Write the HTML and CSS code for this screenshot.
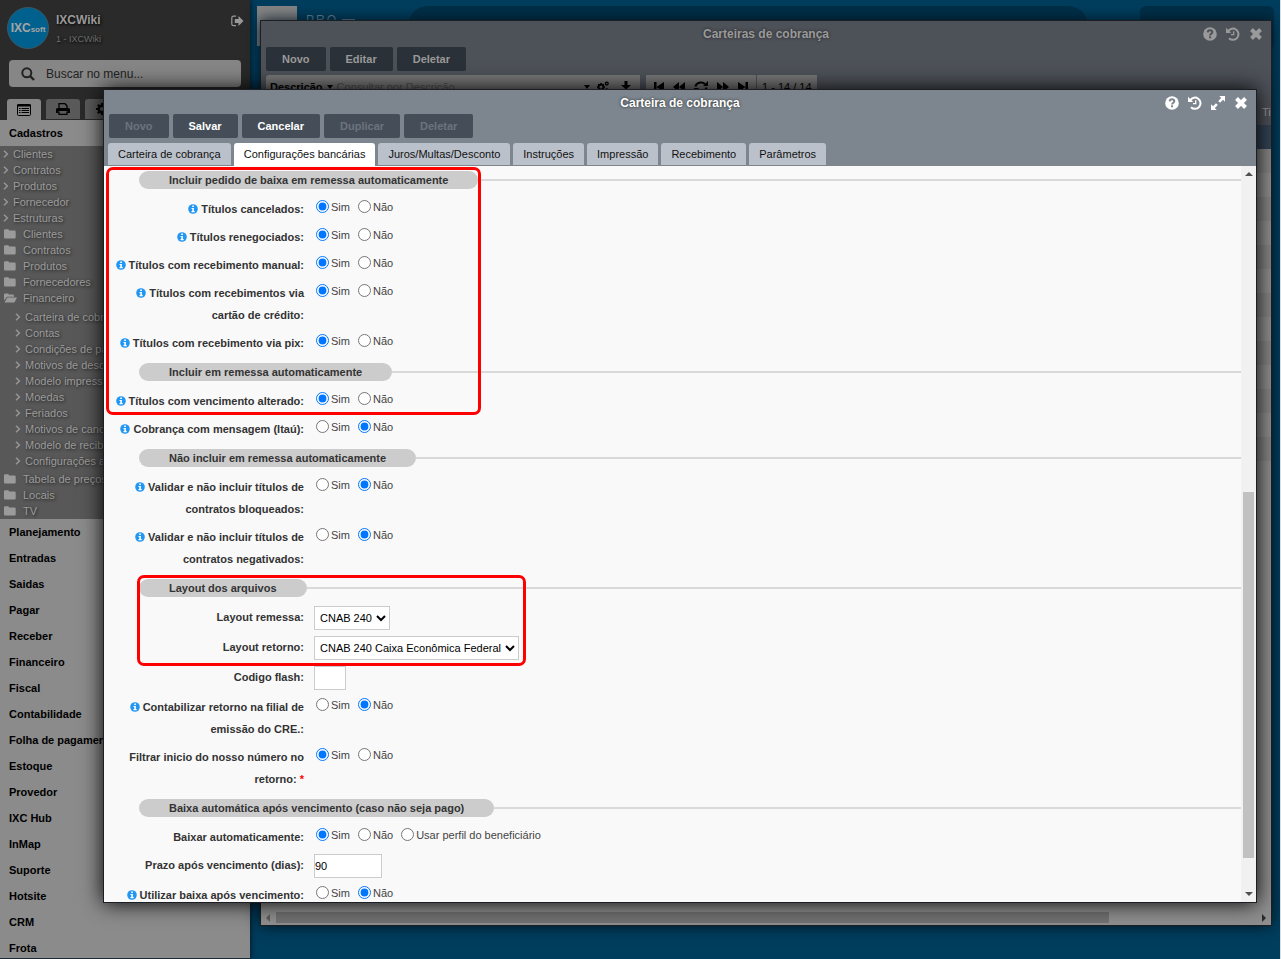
FILE: index.html
```html
<!DOCTYPE html>
<html lang="pt-BR">
<head>
<meta charset="utf-8">
<title>IXCWiki</title>
<link rel="stylesheet" href="styles.css">
</head>
<body>
<svg class="sprite" aria-hidden="true">
  <symbol id="i-help" viewBox="0 0 14 14"><circle cx="7" cy="7" r="6.8" fill="currentColor"/><path d="M4.700 5.400C4.800 3.900 5.800 3.300 7 3.300s2.300.6 2.300 1.900c0 1.500-2.200 1.500-2.200 3.200" fill="none" stroke="var(--hole)" stroke-width="2"/><rect x="6.100" y="9.300" width="2" height="2" fill="var(--hole)"/></symbol>
  <symbol id="i-history" viewBox="0 0 14 14"><path d="M2.200 4.200A5.600 5.600 0 1 1 3 11.200" fill="none" stroke="currentColor" stroke-width="2"/><path d="M0 .8V6h5.200z" fill="currentColor"/><path d="M7.700 4.200v3.500H5" fill="none" stroke="currentColor" stroke-width="1.300"/></symbol>
  <symbol id="i-expand" viewBox="0 0 14 14"><path d="M8.300 0H14v5.700L12 3.800 9 6.800 7.200 5l3-3zM5.700 14H0V8.300l2 1.900 3-3L6.800 9l-3 3z" fill="currentColor"/></symbol>
  <symbol id="i-close" viewBox="0 0 14 14"><path d="M2.500 2.500l9 9M11.500 2.500l-9 9" stroke="currentColor" stroke-width="4" fill="none"/></symbol>
  <symbol id="i-info" viewBox="0 0 10 10"><circle cx="5" cy="5" r="4.800" fill="#2196f3"/><path d="M4.200 1.500h1.700v1.400H4.200zM3.500 4h2.400v3h.8v1.200H3.500V7h.8V5.100h-.8z" fill="#fff"/></symbol>
  <symbol id="i-angle" viewBox="0 0 6 8"><path d="M1 .8L4.400 4 1 7.200" fill="none" stroke="currentColor" stroke-width="1.300"/></symbol>
  <symbol id="i-folder" viewBox="0 0 12 10"><path d="M0 1.500Q0 .3 1.200.3h2.600Q5 .3 5 1.500h5.500q1.200 0 1.200 1.200v5.600q0 1.200-1.200 1.200H1.200Q0 9.500 0 8.300z" fill="currentColor"/></symbol>
  <symbol id="i-folder-open" viewBox="0 0 13 10"><path d="M0 7.500v-6Q0 .4 1.200.4h2.500q1.100 0 1.100 1.100h4q1.200 0 1.200 1.200v1H3.800q-.8 0-1.300.6zM3.900 4.600H13L10.700 9q-.3.500-1 .5H.5L3 5.100q.3-.5.900-.5z" fill="currentColor"/></symbol>
  <symbol id="i-logout" viewBox="0 0 13 12"><path d="M5 1.200H2.500Q.8 1.200.8 2.900v6q0 1.700 1.700 1.700H5" fill="none" stroke="currentColor" stroke-width="1.200"/><path d="M7.500 1l5 5-5 5V8H3.800V4h3.700z" fill="currentColor"/></symbol>
  <symbol id="i-search" viewBox="0 0 14 14"><circle cx="5.800" cy="5.800" r="4.500" fill="none" stroke="currentColor" stroke-width="2"/><path d="M9 9l4 4" stroke="currentColor" stroke-width="2.400"/></symbol>
  <symbol id="i-list" viewBox="0 0 14 12"><rect x=".5" y=".5" width="13" height="11" rx="1" fill="none" stroke="currentColor"/><path d="M0 1.500h14" stroke="currentColor" stroke-width="2"/><path d="M2 4.500h1.500M4.500 4.500H12M2 6.500h1.500M4.500 6.500H12M2 8.500h1.500M4.500 8.500H12" stroke="currentColor"/></symbol>
  <symbol id="i-print" viewBox="0 0 14 12"><path d="M3 6V.7h6L11 2.700V6" fill="none" stroke="currentColor" stroke-width="1.300"/><path d="M1.500 5h11Q14 5 14 6.500V10h-2.500V8h-9v2H0V6.500Q0 5 1.500 5z" fill="currentColor"/><path d="M3 8.500v2.800h8V8.500" fill="none" stroke="currentColor" stroke-width="1.300"/></symbol>
  <symbol id="i-gear" viewBox="0 0 12 12"><circle cx="6" cy="6" r="3.300" fill="none" stroke="currentColor" stroke-width="2.400"/><path d="M6 0v2.500M6 9.500V12M0 6h2.500M9.500 6H12M1.800 1.800l1.700 1.700M8.500 8.500l1.700 1.700M10.200 1.800L8.500 3.500M3.500 8.500l-1.700 1.700" stroke="currentColor" stroke-width="2"/></symbol>
  <symbol id="i-gears" viewBox="0 0 12 12"><circle cx="4" cy="6" r="2.400" fill="none" stroke="currentColor" stroke-width="1.700"/><path d="M4 2v1.600M4 8.400V10M0 6h1.600M6.400 6H8M1.200 3.200l1.200 1.200M5.600 7.600l1.200 1.200M6.800 3.200L5.600 4.400M2.400 7.600L1.200 8.800" stroke="currentColor" stroke-width="1.500"/><circle cx="9.800" cy="2.600" r="1.400" fill="none" stroke="currentColor" stroke-width="1.300"/><circle cx="9.800" cy="9.400" r="1.400" fill="none" stroke="currentColor" stroke-width="1.300"/></symbol>
  <symbol id="i-download" viewBox="0 0 12 12"><path d="M4.500 0h3v4H11L6 8.500 1 4h3.500zM0 9h12v3H0z" fill="currentColor"/></symbol>
  <symbol id="i-first" viewBox="0 0 10 12"><path d="M0 1h2.500v10H0zM10 1v10L2.500 6z" fill="currentColor"/></symbol>
  <symbol id="i-prev" viewBox="0 0 12 12"><path d="M6 1v10L0 6zM12 1v10L6 6z" fill="currentColor"/></symbol>
  <symbol id="i-refresh" viewBox="0 0 14 12"><path d="M1.500 5.500A5.500 4.500 0 0 1 11 3M12.500 6.500A5.500 4.500 0 0 1 3 9" fill="none" stroke="currentColor" stroke-width="2"/><path d="M14 0v5H9zM0 12V7h5z" fill="currentColor"/></symbol>
</svg>

<div class="app">
  <aside class="sidebar">
    <header class="profile">
      <div class="logo"><b>IXC</b><span>soft</span></div>
      <div class="who"><strong>IXCWiki</strong><small>1 - IXCWiki</small></div>
      <button class="plain" aria-label="Sair"><svg width="13" height="12"><use href="#i-logout"/></svg></button>
    </header>
    <label class="search"><svg width="14" height="14"><use href="#i-search"/></svg><input type="text" placeholder="Buscar no menu..." aria-label="Buscar no menu"></label>
    <div class="modes">
      <button class="mode mode-on" aria-label="Menu"><svg width="14" height="12"><use href="#i-list"/></svg></button>
      <button class="mode" aria-label="Imprimir"><svg width="14" height="12"><use href="#i-print"/></svg></button>
      <button class="mode" aria-label="Ajustes"><svg width="12" height="12"><use href="#i-gear"/></svg></button>
    </div>
    <nav>
      <a class="group" href="#">Cadastros</a>
      <div class="tree">
        <a href="#"><svg width="6" height="8"><use href="#i-angle"/></svg>Clientes</a>
        <a href="#"><svg width="6" height="8"><use href="#i-angle"/></svg>Contratos</a>
        <a href="#"><svg width="6" height="8"><use href="#i-angle"/></svg>Produtos</a>
        <a href="#"><svg width="6" height="8"><use href="#i-angle"/></svg>Fornecedor</a>
        <a href="#"><svg width="6" height="8"><use href="#i-angle"/></svg>Estruturas</a>
        <a class="folder" href="#"><svg width="12" height="10"><use href="#i-folder"/></svg>Clientes</a>
        <a class="folder" href="#"><svg width="12" height="10"><use href="#i-folder"/></svg>Contratos</a>
        <a class="folder" href="#"><svg width="12" height="10"><use href="#i-folder"/></svg>Produtos</a>
        <a class="folder" href="#"><svg width="12" height="10"><use href="#i-folder"/></svg>Fornecedores</a>
        <a class="folder" href="#"><svg width="13" height="10"><use href="#i-folder-open"/></svg>Financeiro</a>
        <div class="subtree">
          <a href="#"><svg width="6" height="8"><use href="#i-angle"/></svg>Carteira de cobrança</a>
          <a href="#"><svg width="6" height="8"><use href="#i-angle"/></svg>Contas</a>
          <a href="#"><svg width="6" height="8"><use href="#i-angle"/></svg>Condições de pagamento</a>
          <a href="#"><svg width="6" height="8"><use href="#i-angle"/></svg>Motivos de desconto</a>
          <a href="#"><svg width="6" height="8"><use href="#i-angle"/></svg>Modelo impressão</a>
          <a href="#"><svg width="6" height="8"><use href="#i-angle"/></svg>Moedas</a>
          <a href="#"><svg width="6" height="8"><use href="#i-angle"/></svg>Feriados</a>
          <a href="#"><svg width="6" height="8"><use href="#i-angle"/></svg>Motivos de cancelamento</a>
          <a href="#"><svg width="6" height="8"><use href="#i-angle"/></svg>Modelo de recibo</a>
          <a href="#"><svg width="6" height="8"><use href="#i-angle"/></svg>Configurações adicionais</a>
        </div>
        <a class="folder" href="#"><svg width="12" height="10"><use href="#i-folder"/></svg>Tabela de preços</a>
        <a class="folder" href="#"><svg width="12" height="10"><use href="#i-folder"/></svg>Locais</a>
        <a class="folder" href="#"><svg width="12" height="10"><use href="#i-folder"/></svg>TV</a>
      </div>
      <a class="group" href="#">Planejamento</a>
      <a class="group" href="#">Entradas</a>
      <a class="group" href="#">Saidas</a>
      <a class="group" href="#">Pagar</a>
      <a class="group" href="#">Receber</a>
      <a class="group" href="#">Financeiro</a>
      <a class="group" href="#">Fiscal</a>
      <a class="group" href="#">Contabilidade</a>
      <a class="group" href="#">Folha de pagamento</a>
      <a class="group" href="#">Estoque</a>
      <a class="group" href="#">Provedor</a>
      <a class="group" href="#">IXC Hub</a>
      <a class="group" href="#">InMap</a>
      <a class="group" href="#">Suporte</a>
      <a class="group" href="#">Hotsite</a>
      <a class="group" href="#">CRM</a>
      <a class="group" href="#">Frota</a>
    </nav>
  </aside>

  <main class="desktop">
    <div class="tile"></div>
    <div class="brand"><span>P</span><span>R</span><span>O</span><i></i></div>
    <div class="bar"></div>
    <div class="chip"></div>
  </main>

  <section class="window back">
    <header class="head">
      <div class="titlebar">
        <h2>Carteiras de cobrança</h2>
        <div class="tools">
          <button class="plain" aria-label="Ajuda"><svg width="14" height="14"><use href="#i-help"/></svg></button>
          <button class="plain" aria-label="Histórico"><svg width="14" height="14"><use href="#i-history"/></svg></button>
          <button class="plain" aria-label="Fechar"><svg width="14" height="14"><use href="#i-close"/></svg></button>
        </div>
      </div>
      <div class="actions"><button>Novo</button><button>Editar</button><button>Deletar</button></div>
      <div class="filters">
        <div class="filter">
          <b>Descrição</b><i class="caret"></i>
          <input type="text" placeholder="Consultar por Descrição" aria-label="Consultar por Descrição">
          <i class="caret"></i><svg width="12" height="12"><use href="#i-gears"/></svg><svg width="12" height="12"><use href="#i-download"/></svg>
        </div>
        <div class="pager">
          <svg width="10" height="12"><use href="#i-first"/></svg>
          <svg width="12" height="12"><use href="#i-prev"/></svg>
          <svg width="14" height="12"><use href="#i-refresh"/></svg>
          <svg class="flip" width="12" height="12"><use href="#i-prev"/></svg>
          <svg class="flip" width="10" height="12"><use href="#i-first"/></svg>
        </div>
        <div class="count">1 - 14 / 14</div>
      </div>
      <div class="columns">Tipo</div>
    </header>
    <div class="rows"></div>
    <div class="hscroll"><i class="left"></i><div class="htrack"><div class="hthumb"></div></div><i class="right"></i></div>
  </section>

  <section class="window front">
    <header class="head">
      <div class="titlebar">
        <h2>Carteira de cobrança</h2>
        <div class="tools">
          <button class="plain" aria-label="Ajuda"><svg width="14" height="14"><use href="#i-help"/></svg></button>
          <button class="plain" aria-label="Histórico"><svg width="14" height="14"><use href="#i-history"/></svg></button>
          <button class="plain" aria-label="Expandir"><svg width="14" height="14"><use href="#i-expand"/></svg></button>
          <button class="plain" aria-label="Fechar"><svg width="14" height="14"><use href="#i-close"/></svg></button>
        </div>
      </div>
      <div class="actions"><button disabled>Novo</button><button>Salvar</button><button>Cancelar</button><button disabled>Duplicar</button><button disabled>Deletar</button></div>
      <div class="tabs" role="tablist">
        <button role="tab">Carteira de cobrança</button><button role="tab" class="active" aria-selected="true">Configurações bancárias</button><button role="tab">Juros/Multas/Desconto</button><button role="tab">Instruções</button><button role="tab">Impressão</button><button role="tab">Recebimento</button><button role="tab">Parâmetros</button>
      </div>
    </header>
    <div class="body">
      <form class="form">
        <div class="section"><h3>Incluir pedido de baixa em remessa automaticamente</h3></div>
        <div class="field"><span class="label"><svg width="10" height="10"><use href="#i-info"/></svg> Títulos cancelados:</span><div class="radios"><label><input type="radio" name="a" checked>Sim</label><label><input type="radio" name="a">Não</label></div></div>
        <div class="field"><span class="label"><svg width="10" height="10"><use href="#i-info"/></svg> Títulos renegociados:</span><div class="radios"><label><input type="radio" name="b" checked>Sim</label><label><input type="radio" name="b">Não</label></div></div>
        <div class="field"><span class="label"><svg width="10" height="10"><use href="#i-info"/></svg> Títulos com recebimento manual:</span><div class="radios"><label><input type="radio" name="c" checked>Sim</label><label><input type="radio" name="c">Não</label></div></div>
        <div class="field"><span class="label"><svg width="10" height="10"><use href="#i-info"/></svg> Títulos com recebimentos via cartão de crédito:</span><div class="radios"><label><input type="radio" name="d" checked>Sim</label><label><input type="radio" name="d">Não</label></div></div>
        <div class="field"><span class="label"><svg width="10" height="10"><use href="#i-info"/></svg> Títulos com recebimento via pix:</span><div class="radios"><label><input type="radio" name="e" checked>Sim</label><label><input type="radio" name="e">Não</label></div></div>
        <div class="section"><h3>Incluir em remessa automaticamente</h3></div>
        <div class="field"><span class="label"><svg width="10" height="10"><use href="#i-info"/></svg> Títulos com vencimento alterado:</span><div class="radios"><label><input type="radio" name="f" checked>Sim</label><label><input type="radio" name="f">Não</label></div></div>
        <div class="field"><span class="label"><svg width="10" height="10"><use href="#i-info"/></svg> Cobrança com mensagem (Itaú):</span><div class="radios"><label><input type="radio" name="g">Sim</label><label><input type="radio" name="g" checked>Não</label></div></div>
        <div class="section"><h3>Não incluir em remessa automaticamente</h3></div>
        <div class="field"><span class="label"><svg width="10" height="10"><use href="#i-info"/></svg> Validar e não incluir títulos de contratos bloqueados:</span><div class="radios"><label><input type="radio" name="h">Sim</label><label><input type="radio" name="h" checked>Não</label></div></div>
        <div class="field"><span class="label"><svg width="10" height="10"><use href="#i-info"/></svg> Validar e não incluir títulos de contratos negativados:</span><div class="radios"><label><input type="radio" name="i">Sim</label><label><input type="radio" name="i" checked>Não</label></div></div>
        <div class="section"><h3>Layout dos arquivos</h3></div>
        <div class="field"><label class="label" for="remessa">Layout remessa:</label><div><select id="remessa"><option>CNAB 240</option></select></div></div>
        <div class="field"><label class="label" for="retorno">Layout retorno:</label><div><select id="retorno"><option>CNAB 240 Caixa Econômica Federal</option></select></div></div>
        <div class="field"><label class="label" for="flash">Codigo flash:</label><div><input class="text tiny" id="flash" type="text"></div></div>
        <div class="field"><span class="label"><svg width="10" height="10"><use href="#i-info"/></svg> Contabilizar retorno na filial de emissão do CRE.:</span><div class="radios"><label><input type="radio" name="j">Sim</label><label><input type="radio" name="j" checked>Não</label></div></div>
        <div class="field"><span class="label">Filtrar inicio do nosso número no retorno: <em>*</em></span><div class="radios"><label><input type="radio" name="k" checked>Sim</label><label><input type="radio" name="k">Não</label></div></div>
        <div class="section"><h3>Baixa automática após vencimento (caso não seja pago)</h3></div>
        <div class="field"><span class="label">Baixar automaticamente:</span><div class="radios"><label><input type="radio" name="l" checked>Sim</label><label><input type="radio" name="l">Não</label><label><input type="radio" name="l">Usar perfil do beneficiário</label></div></div>
        <div class="field"><label class="label" for="prazo">Prazo após vencimento (dias):</label><div><input class="text" id="prazo" type="text" value="90"></div></div>
        <div class="field"><span class="label"><svg width="10" height="10"><use href="#i-info"/></svg> Utilizar baixa após vencimento:</span><div class="radios"><label><input type="radio" name="m">Sim</label><label><input type="radio" name="m" checked>Não</label></div></div>
      </form>
      <div class="vscroll"><i class="up"></i><div class="vtrack"><div class="vthumb"></div></div><i class="down"></i></div>
      <div class="mark mark-a"></div>
      <div class="mark mark-b"></div>
    </div>
  </section>
</div>
</body>
</html>
```

FILE: styles.css
```css
* { box-sizing: border-box; }
body { margin: 0; font: 11px "Liberation Sans", Arial, sans-serif; background: #d8dee2; }
button, input, select { font: inherit; }
a { color: inherit; text-decoration: none; }
h2, h3 { margin: 0; }
svg { display: block; flex: none; }
.sprite { position: absolute; width: 0; height: 0; }
.plain { padding: 0; border: 0; background: none; color: inherit; }
.caret { border: 3px solid transparent; border-top: 4px solid #000; border-bottom: 0; }

.app { position: relative; display: flex; height: 100vh; overflow: hidden; background: #003e5e; border-right: 1px solid #d8dee2; }

/* Sidebar */
.sidebar { z-index: 1; width: 250px; flex: none; overflow: hidden; background: #2a2a2a; border-bottom: 1px solid #1c2b33; box-shadow: 0 0 6px #001018; }
.profile { display: flex; align-items: flex-start; padding: 7px 6px 0 7px; height: 60px; color: #999; }
.logo { display: flex; align-items: baseline; justify-content: center; width: 42px; height: 42px; line-height: 40px; border-radius: 50%; border: 1px solid #3b5666; background: #00618e; color: #a5a5a5; font-size: 8px; font-weight: bold; }
.logo b { font-size: 12px; }
.who { flex: 1; display: flex; flex-direction: column; padding-left: 7px; text-shadow: 1px 1px 3px #000; }
.who strong { font-size: 12px; line-height: 26px; color: #9a9a9a; }
.who small { font-size: 9px; line-height: 12px; color: #6e6e6e; }
.profile .plain { padding-top: 8px; }
.search { display: flex; align-items: center; gap: 11px; height: 27px; margin: 0 9px; padding: 0 12px; border-radius: 4px; background: #868686; color: #222; }
.search input { flex: 1; min-width: 0; padding: 0; border: 0; background: none; font-size: 12px; }
.search input::placeholder { color: #222; opacity: 1; }
.modes { display: flex; gap: 5px; padding: 12px 7px 0; height: 33px; }
.mode { display: flex; align-items: center; justify-content: center; width: 34px; height: 20px; padding: 0; border: 0; border-radius: 3px 3px 0 0; background: #5a5a5a; color: #000; }
.mode-on { height: 21px; background: #868686; }
.group { display: block; padding-left: 9px; line-height: 26px; font-weight: bold; color: #000; background: #8b8b8b; }
.tree { background: #585858; color: #9b9b9b; text-shadow: 1px 1px 3px #222; }
.tree a { display: flex; align-items: center; gap: 4px; padding-left: 3px; line-height: 16px; white-space: nowrap; }
.tree .folder { display: grid; grid-template-columns: 15px 1fr; padding-left: 4px; }
.subtree { padding: 3px 0 2px 12px; }

/* Desktop behind the windows */
.desktop { flex: 1; min-width: 0; display: flex; align-items: flex-start; padding: 6px 6px 0 7px; }
.tile { width: 40px; height: 40px; background: #858585; }
.brand { display: flex; align-items: flex-start; gap: 2px; width: 111px; padding: 7px 0 0 9px; font-size: 12px; color: #6c8a9b; }
.brand i { width: 13px; height: 1px; margin: 6px 0 0 4px; background: #6c8a9b; }
.bar { flex: 1; height: 44px; border-radius: 20px; background: #002f48; }
.chip { width: 134px; height: 44px; margin-left: 52px; border-radius: 6px; background: #002f48; }

/* Windows */
.window { position: absolute; z-index: 2; display: flex; flex-direction: column; border: 1px solid #1b1e22; }
.back { --hole: #4d5158; top: 20px; right: 8px; bottom: 33px; left: 260px; color: #9a9a9a; background: #888; box-shadow: 0 0 14px #00141f; }
.front { --hole: #7d868f; top: 89px; right: 23px; bottom: 56px; left: 103px; color: #fff; background: #f9f9f9; box-shadow: 0 0 20px #000; }
.head { flex: none; overflow: hidden; background: var(--hole); }
.titlebar { display: grid; grid-template-columns: 1fr auto 1fr; align-items: center; height: 26px; padding: 0 8px; }
.front .titlebar { height: 24px; padding-top: 2px; }
.titlebar h2 { grid-column: 2; font-size: 12px; line-height: 16px; text-shadow: 0 0 3px #222; }
.tools { display: flex; justify-content: flex-end; gap: 9px; }
.actions { display: flex; gap: 4px; padding: 0 5px; }
.actions button { height: 24px; padding: 0 16px; border: 0; border-radius: 2px; font-weight: bold; color: inherit; background: #454e58; }
.actions button:disabled { color: #6b747e; }
.back .actions button { background: #2b3138; }

.filters { display: flex; gap: 1px; height: 38px; padding: 4px 5px 0; color: #000; }
.filters > div { display: flex; align-items: center; height: 24px; padding: 0 5px; background: #777; }
.filters .filter { gap: 4px; width: 374px; padding: 0 4px; margin-right: 5px; border-radius: 3px 0 0 3px; }
.filter input { flex: 1; min-width: 0; padding: 0; border: 0; background: none; }
.filter input::placeholder { color: #4f4f4f; opacity: 1; }
.filter svg { margin: 0 4px 0 3px; }
.filters .pager { justify-content: space-between; width: 110px; padding: 0 8px; }
.flip { transform: scaleX(-1); }
.columns { height: 16px; margin-right: -12px; text-align: right; line-height: 6px; }
.rows { flex: 1; border-top: 24px solid #324253; background: repeating-linear-gradient(#868686 0 24px, #8f8f8f 24px 48px) top / 100% 336px no-repeat #8f8f8f; }
.hscroll { display: flex; align-items: center; gap: 6px; height: 15px; padding: 0 5px; background: #8e8e8e; }
.hscroll i { border: 4px solid transparent; }
.hscroll .left { border-right: 4px solid #5c5c5c; border-left: 0; }
.hscroll .right { border-left: 4px solid #2a2a2a; border-right: 0; }
.htrack { flex: 1; }
.hthumb { width: 85%; height: 11px; background: #717171; }

.tabs { display: flex; gap: 3px; height: 28px; padding: 5px 4px 0; }
.tabs button { height: 22px; padding: 0 10px; border: 0; border-radius: 3px 3px 0 0; color: #111; background: #bbc1ca; }
.tabs .active { height: 23px; padding-bottom: 1px; background: #fff; }

/* Form */
.body { position: relative; flex: 1; min-height: 0; display: flex; overflow: hidden; color: #333; }
.form { flex: 1; display: flex; flex-direction: column; gap: 6px; padding: 5px 0 0 10px; }
.section { display: flex; align-items: center; margin: 3px 0 3px 25px; }
.section:first-child { margin-top: 0; }
.section::after { content: ""; flex: 1; height: 2px; background: #d9d9d9; }
.section h3 { padding: 0 30px; border-radius: 9px; font-size: 11px; line-height: 18px; background: #ccc; }
.field { flex: none; display: grid; grid-template-columns: 190px 1fr; gap: 10px; align-items: start; }
.label { text-align: right; line-height: 22px; font-weight: bold; }
.label svg { display: inline-block; vertical-align: -1px; }
.label em { color: #f00; font-style: normal; }
.radios { display: flex; gap: 8px; padding-left: 2px; height: 18px; color: #444; }
.radios label { display: flex; align-items: center; gap: 2px; }
.radios input { width: 13px; height: 13px; margin: 0 0 2px; }
select, .text { display: block; height: 24px; border: 1px solid #ccc; border-radius: 0; background: #fff; color: #000; }
select { padding: 0 1px; }
.text { width: 68px; padding: 0; }
.tiny { width: 32px; }

.vscroll { display: flex; flex-direction: column; align-items: center; gap: 4px; width: 15px; padding: 6px 0; background: #f1f1f1; }
.vscroll i { border: 4px solid transparent; }
.vscroll .up { border-bottom: 4px solid #505050; border-top: 0; }
.vscroll .down { border-top: 4px solid #505050; border-bottom: 0; }
.vtrack { flex: 1; display: flex; flex-direction: column; justify-content: flex-end; padding-bottom: 30px; }
.vthumb { width: 11px; height: 54%; background: #c1c1c1; }

.mark { position: absolute; border: 3px solid #f00; border-radius: 7px; pointer-events: none; }
.mark-a { top: 1px; left: 2px; width: 375px; height: 248px; }
.mark-b { top: 409px; left: 33px; width: 389px; height: 91px; }
```
